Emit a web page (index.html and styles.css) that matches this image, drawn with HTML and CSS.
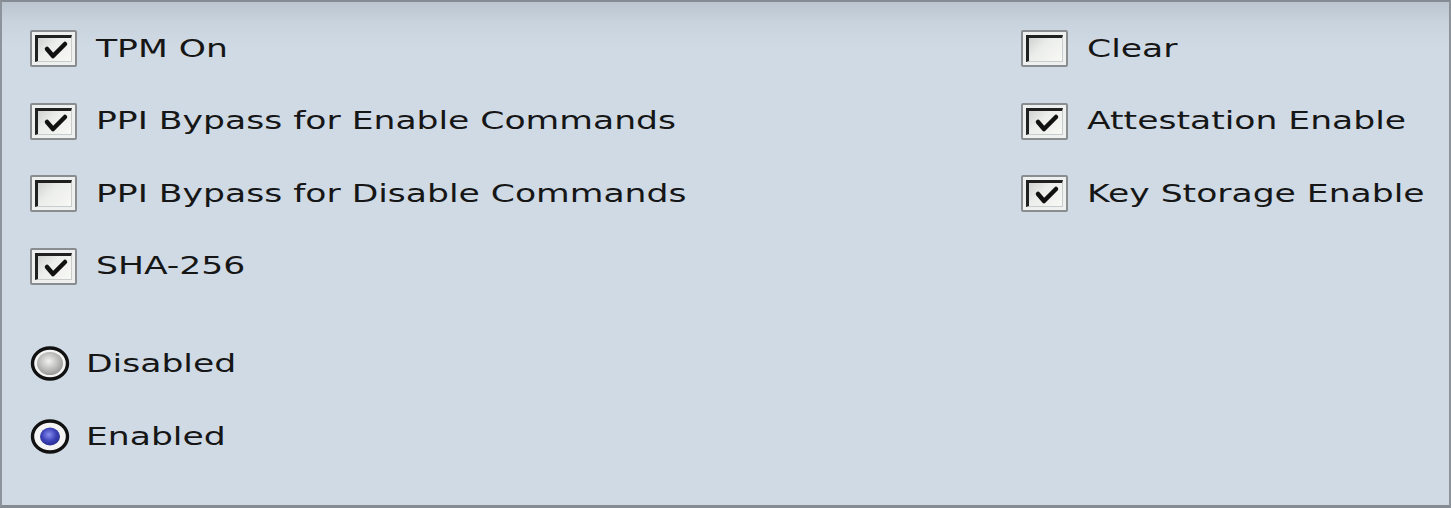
FILE: index.html
```html
<!DOCTYPE html>
<html>
<head>
<meta charset="utf-8">
<link rel="stylesheet" href="styles.css">
</head>
<body>
<div class="frame">
  <div class="cols">
    <div class="col left">
      <div class="row"><span class="cb checked"><span class="cb-in"><svg viewBox="0 0 30 22" class="tick"><path d="M6 9 L12 16 L24 4" /></svg></span></span><span class="label">TPM On</span></div>
      <div class="row"><span class="cb checked"><span class="cb-in"><svg viewBox="0 0 30 22" class="tick"><path d="M6 9 L12 16 L24 4" /></svg></span></span><span class="label">PPI Bypass for Enable Commands</span></div>
      <div class="row"><span class="cb"><span class="cb-in"></span></span><span class="label">PPI Bypass for Disable Commands</span></div>
      <div class="row"><span class="cb checked"><span class="cb-in"><svg viewBox="0 0 30 22" class="tick"><path d="M6 9 L12 16 L24 4" /></svg></span></span><span class="label">SHA-256</span></div>
      <div class="radios">
        <div class="rrow"><svg class="radio" viewBox="0 0 40 37"><defs><radialGradient id="g1" cx="45%" cy="40%" r="60%"><stop offset="0" stop-color="#f2f2f0"/><stop offset="1" stop-color="#9a9a98"/></radialGradient></defs><ellipse cx="20" cy="18.5" rx="17.5" ry="15.5" fill="#f4f4f4" stroke="#111" stroke-width="3.4"/><ellipse cx="20" cy="18.5" rx="13" ry="11.5" fill="url(#g1)"/></svg><span class="label rl">Disabled</span></div>
        <div class="rrow"><svg class="radio" viewBox="0 0 40 37"><defs><radialGradient id="g2" cx="45%" cy="40%" r="60%"><stop offset="0" stop-color="#8a90f0"/><stop offset="0.6" stop-color="#3c42b8"/><stop offset="1" stop-color="#2a2f90"/></radialGradient></defs><ellipse cx="20" cy="18.5" rx="17.5" ry="15.5" fill="#f4f4f4" stroke="#111" stroke-width="3.4"/><ellipse cx="20" cy="18.5" rx="10" ry="9" fill="url(#g2)"/></svg><span class="label rl">Enabled</span></div>
      </div>
    </div>
    <div class="col right">
      <div class="row"><span class="cb"><span class="cb-in"></span></span><span class="label">Clear</span></div>
      <div class="row"><span class="cb checked"><span class="cb-in"><svg viewBox="0 0 30 22" class="tick"><path d="M6 9 L12 16 L24 4" /></svg></span></span><span class="label">Attestation Enable</span></div>
      <div class="row"><span class="cb checked"><span class="cb-in"><svg viewBox="0 0 30 22" class="tick"><path d="M6 9 L12 16 L24 4" /></svg></span></span><span class="label">Key Storage Enable</span></div>
    </div>
  </div>
</div>
</body>
</html>
```

FILE: styles.css
```css
html, body {
  margin: 0;
  padding: 0;
  background: #cfdae5;
}
.frame {
  box-sizing: border-box;
  width: 1451px;
  height: 508px;
  border-top: 2px solid #858b92;
  border-left: 2px solid #8d939a;
  border-right: 2px solid #8d939a;
  border-bottom: 3px solid #858b92;
  background: linear-gradient(to bottom, #bac5d0 0px, #c8d3de 20px, #cfdae5 45px, #cfdae5 100%);
  padding: 28px 0 0 28px;
  font-family: "DejaVu Sans", "Liberation Sans", sans-serif;
  color: #161616;
}
.cols {
  display: flex;
}
.col {
  display: flex;
  flex-direction: column;
  gap: 35.5px;
}
.left {
  width: 991px;
}
.row {
  display: flex;
  align-items: center;
  height: 37px;
}
.cb {
  box-sizing: border-box;
  width: 47px;
  height: 37px;
  border: 2px solid #8a8d90;
  border-radius: 2px;
  background: #eef0f0;
  padding: 3px;
  display: flex;
  flex: none;
}
.cb-in {
  box-sizing: border-box;
  flex: 1;
  border-top: 3px solid #202020;
  border-left: 3px solid #202020;
  border-right: 1px solid #c9cccc;
  border-bottom: 1px solid #c9cccc;
  background: linear-gradient(135deg, #cfd2d0 0%, #eceeec 40%, #f8f8f4 100%);
  display: flex;
  align-items: center;
  justify-content: center;
}
.tick {
  width: 30px;
  height: 22px;
  margin-top: 3px;
  margin-left: 2px;
}
.tick path {
  fill: none;
  stroke: #111;
  stroke-width: 4.5;
  stroke-linecap: round;
  stroke-linejoin: round;
}
.label {
  display: inline-block;
  margin-left: 19px;
  font-size: 24px;
  white-space: nowrap;
  transform: scaleX(1.44);
  transform-origin: left center;
}
.radios {
  display: flex;
  flex-direction: column;
  gap: 36px;
  margin-top: 25px;
}
.rrow {
  display: flex;
  align-items: center;
  height: 37px;
}
.radio {
  width: 40px;
  height: 37px;
  flex: none;
}
.rl {
  margin-left: 16px;
}
```
